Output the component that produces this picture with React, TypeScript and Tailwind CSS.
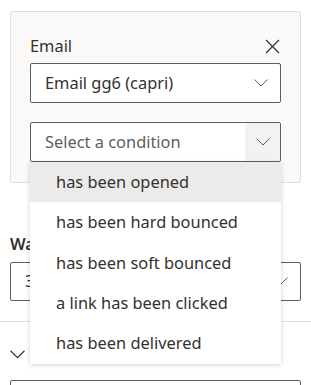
import React from "react";

const Chevron = ({ className }: { className?: string }) => (
    <svg className={className} width="14" height="8" viewBox="0 0 14 8" fill="none">
        <path d="M0.5 0.5L7 7L13.5 0.5" stroke="currentColor" strokeWidth="1" />
    </svg>
);

const options = [
    "has been opened",
    "has been hard bounced",
    "has been soft bounced",
    "a link has been clicked",
    "has been delivered",
];

const App = () => {
    return (
        <div
            className="relative w-[311px] h-[385px] overflow-hidden bg-white text-[#323130] text-[16.4px]"
            style={{ fontFamily: '"Segoe UI", "Noto Sans", sans-serif' }}
        >
            <div className="pt-[11px] px-[10px]">
                <div className="bg-[#faf9f8] border border-[#e1dfdd] rounded-[2px] pt-[22px] px-[19px] pb-[20px]">
                    <div className="flex items-center justify-between h-[24px] mb-[5px]">
                        <span>Email</span>
                        <svg className="mr-[1px]" width="15" height="15" viewBox="0 0 15 15" fill="none">
                            <path d="M1 1L14 14M14 1L1 14" stroke="#323130" strokeWidth="1.2" />
                        </svg>
                    </div>
                    <div className="flex items-center justify-between h-[40px] border border-[#605e5c] rounded-[2px] bg-white pl-[14px] pr-[12px]">
                        <span>Email gg6 (capri)</span>
                        <Chevron className="text-[#605e5c]" />
                    </div>
                    <div className="flex items-stretch h-[40px] mt-[19px] border border-[#605e5c] rounded-[2px] bg-white">
                        <span className="flex-1 flex items-center pl-[14px] text-[#605e5c]">Select a condition</span>
                        <span className="w-[35px] flex items-center justify-center bg-[#f3f2f1]">
                            <Chevron className="text-[#605e5c]" />
                        </span>
                    </div>
                </div>

                <div className="mt-[49px] font-semibold">Wait up to</div>
                <div className="flex items-center justify-between h-[39px] mt-[5px] border border-[#605e5c] rounded-[2px] pl-[14px] pr-[12px]">
                    <span>3 days</span>
                    <Chevron className="text-[#605e5c]" />
                </div>
            </div>

            <div className="mt-[20px] border-t border-[#e1dfdd]" />

            <div className="px-[10px] pt-[21px]">
                <div className="flex items-center gap-[11px] h-[24px]">
                    <Chevron className="text-[#323130] w-[15px] h-[9px]" />
                    <span className="font-semibold">Time policy</span>
                </div>
                <div className="h-[40px] mt-[13px] border border-[#605e5c] rounded-[2px]" />
            </div>

            <div className="absolute left-[30px] top-[162px] w-[251px] bg-white shadow-[0_1px_5px_rgba(0,0,0,0.18)]">
                {options.map((o, i) => (
                    <div
                        key={o}
                        className={
                            "h-[40.4px] flex items-center pl-[26px]" + (i === 0 ? " bg-[#edebe9]" : "")
                        }
                    >
                        {o}
                    </div>
                ))}
            </div>
        </div>
    );
};

export default App;
